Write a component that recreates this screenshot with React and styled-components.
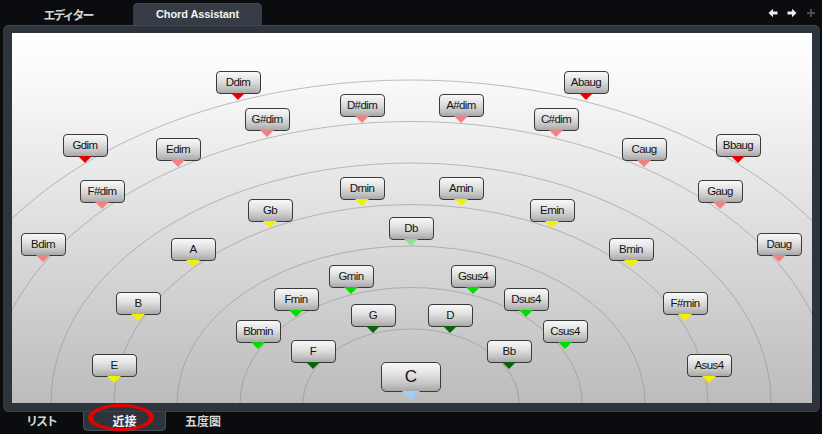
import React from 'react';
import styled, { createGlobalStyle } from 'styled-components';

const Global = createGlobalStyle`
  html, body { margin: 0; padding: 0; background: #0b0c0f; }
  #root { width: 822px; height: 434px; }
`;

const Window = styled.div`
  width: 822px;
  height: 434px;
  background: #0b0c0f;
  display: flex;
  flex-direction: column;
  overflow: hidden;
  font-family: "Liberation Sans", Arial, sans-serif;
`;

const TopBar = styled.div`
  height: 25px;
  flex-shrink: 0;
  display: flex;
  align-items: flex-end;
`;

const TopTab = styled.div`
  height: 22px;
  width: ${p => p.$w}px;
  margin-left: ${p => p.$ml}px;
  display: flex;
  align-items: center;
  justify-content: center;
  box-sizing: border-box;
  font-family: "Liberation Sans", "Noto Sans CJK JP", sans-serif;
  font-weight: bold;
  font-size: ${p => p.$fs}px;
  letter-spacing: ${p => p.$ls}px;
  color: ${p => (p.$active ? '#f2f3f4' : '#d4d5d6')};
  background: ${p => (p.$active ? '#363c45' : 'transparent')};
  border-radius: 5px 5px 0 0;
  box-shadow: ${p => (p.$active ? 'inset 0 1px 0 #454b54' : 'none')};
`;

const Tools = styled.div`
  margin-left: auto;
  align-self: center;
  display: flex;
  align-items: center;
  gap: 9px;
  padding-right: 6px;
`;

const Panel = styled.div`
  margin-left: 3px;
  width: 817px;
  height: 387px;
  flex-shrink: 0;
  box-sizing: border-box;
  padding: 8px 8px 9px 9px;
  background: #2e343c;
  border-radius: 6px;
  box-shadow: inset 0 1px 0 #414850, inset 0 -1px 0 #3a4149;
`;

const Canvas = styled.div`
  position: relative;
  width: 800px;
  height: 370px;
  overflow: hidden;
  background: linear-gradient(to bottom, #ffffff 0%, #fbfbfb 10%, #e3e3e3 45%, #bdbcbc 100%);
`;

const Rings = styled.svg`
  position: absolute;
  inset: 0;
`;

const Node = styled.div.attrs(p => ({
  style: { left: `${p.$x}px`, top: `${p.$y}px` },
}))`
  position: absolute;
  width: ${p => (p.$big ? 60 : 45)}px;
  display: flex;
  flex-direction: column;
  align-items: center;
`;

const ChordBox = styled.div`
  width: 100%;
  height: ${p => (p.$big ? 30 : 23)}px;
  box-sizing: border-box;
  border: 1px solid #3a3a3a;
  border-radius: ${p => (p.$big ? 5 : 4)}px;
  background: linear-gradient(to bottom, #f8f8f8 0%, #e2e2e2 40%, #c4c4c4 75%, #a8a8a8 100%);
  display: flex;
  align-items: center;
  justify-content: center;
  font-family: "Liberation Sans", Arial, sans-serif;
  font-size: ${p => (p.$big ? 17 : 11.5)}px;
  letter-spacing: ${p => (p.$big ? 0 : -0.6)}px;
  color: #141414;
  padding-bottom: 1px;
`;

const Pointer = styled.div`
  width: ${p => (p.$big ? 18 : 14)}px;
  height: ${p => (p.$big ? 10 : 7)}px;
  margin-top: -1px;
  background: ${p => p.$c};
  clip-path: polygon(0 0, 100% 0, 50% 100%);
`;

const BottomBar = styled.div`
  height: 22px;
  flex-shrink: 0;
  display: flex;
  align-items: flex-start;
`;

const BottomTab = styled.div`
  position: relative;
  height: 19px;
  width: ${p => p.$w}px;
  margin-left: ${p => p.$ml}px;
  box-sizing: border-box;
  padding-bottom: 3px;
  display: flex;
  align-items: center;
  justify-content: center;
  font-family: "Noto Sans CJK JP", sans-serif;
  font-weight: bold;
  font-size: 12px;
  line-height: 13px;
  letter-spacing: ${p => p.$ls}px;
  color: ${p => (p.$active ? '#f2f3f4' : '#d4d5d6')};
  background: ${p => (p.$active ? '#2e343c' : 'transparent')};
  border-radius: 0 0 5px 5px;
  box-shadow: ${p => (p.$active ? 'inset 1px 0 0 #464d55, inset -1px 0 0 #464d55, inset 0 -1px 0 #464d55' : 'none')};
`;

const Mark = styled.div`
  position: absolute;
  left: 5px;
  top: -8px;
  width: 66px;
  height: 27px;
  box-sizing: border-box;
  border-style: solid;
  border-color: #e60000;
  border-width: 3px 5px;
  border-radius: 50%;
  z-index: 2;
`;

const R = '#e60000';
const P = '#f08282';
const Y = '#f0f000';
const LG = '#8ee28e';
const G = '#00dd00';
const DG = '#0b620b';
const BL = '#a6cbf3';

const chords = [
  ['Ddim', 238, 100, R], ['Abaug', 586, 100, R],
  ['D#dim', 362, 123, P], ['A#dim', 461, 123, P],
  ['G#dim', 267, 137, P], ['C#dim', 556, 137, P],
  ['Gdim', 85, 163, R], ['Bbaug', 738, 163, R],
  ['Edim', 178, 167, P], ['Caug', 644, 167, P],
  ['F#dim', 102, 209, P], ['Gaug', 720, 209, P],
  ['Dmin', 362, 206, Y], ['Amin', 461, 206, Y],
  ['Gb', 270, 228, Y], ['Emin', 552, 228, Y],
  ['Db', 411, 246, LG],
  ['Bdim', 43, 262, P], ['Daug', 779, 262, P],
  ['A', 193, 267, Y], ['Bmin', 631, 267, Y],
  ['Gmin', 351, 294, G], ['Gsus4', 473, 294, G],
  ['Fmin', 296, 317, G], ['Dsus4', 526, 317, G],
  ['B', 138, 321, Y], ['F#min', 685, 321, Y],
  ['G', 373, 333, DG], ['D', 450, 333, DG],
  ['Bbmin', 258, 349, G], ['Csus4', 565, 349, G],
  ['F', 313, 369, DG], ['Bb', 509, 369, DG],
  ['E', 114, 383, Y], ['Asus4', 709, 383, Y],
];

const rings = [1, 2, 3, 4, 5, 6, 7].map(k => ({ rx: 45 + 63 * k, ry: 32.5 + 41.5 * k }));

const Arrow = ({ dir }) => (
  <svg width="10" height="10" viewBox="0 0 10 10">
    <path
      d="M0.5 5 L5 0.8 L5 3.4 L9.5 3.4 L9.5 6.6 L5 6.6 L5 9.2 Z"
      fill="#ececec"
      transform={dir === 'right' ? 'translate(10 0) scale(-1 1)' : undefined}
    />
  </svg>
);

const Plus = () => (
  <svg width="10" height="10" viewBox="0 0 10 10">
    <path d="M4 1h2v3h3v2h-3v3h-2v-3h-3v-2h3z" fill="#4b4d50" />
  </svg>
);

const Chord = ({ name, x, y, color, big }) => {
  const w = big ? 60 : 45;
  const h = big ? 39 : 29;
  return (
    <Node $x={x - 12 - w / 2} $y={y - 33 - h} $big={big}>
      <ChordBox $big={big}>{name}</ChordBox>
      <Pointer $c={color} $big={big} />
    </Node>
  );
};

export default function App() {
  return (
    <>
      <Global />
      <Window>
        <TopBar>
          <TopTab $w={100} $ml={18} $fs={12} $ls={-2}>エディター</TopTab>
          <TopTab $w={129} $ml={15} $fs={11} $ls={-0.1} $active>Chord Assistant</TopTab>
          <Tools>
            <Arrow dir="left" />
            <Arrow dir="right" />
            <Plus />
          </Tools>
        </TopBar>
        <Panel>
          <Canvas>
            <Rings width="800" height="370" viewBox="0 0 800 370">
              {rings.map((r, i) => (
                <ellipse
                  key={i}
                  cx="399"
                  cy="370"
                  rx={r.rx}
                  ry={r.ry}
                  fill="none"
                  stroke="#8c8c8c"
                  strokeOpacity="0.55"
                  strokeWidth="1"
                />
              ))}
            </Rings>
            {chords.map(([n, x, y, c]) => (
              <Chord key={n} name={n} x={x} y={y} color={c} />
            ))}
            <Chord name="C" x={411} y={401} color={BL} big />
          </Canvas>
        </Panel>
        <BottomBar>
          <BottomTab $w={76} $ml={3} $ls={-2}>リスト</BottomTab>
          <BottomTab $w={83} $ml={4} $ls={0} $active>
            近接
            <Mark />
          </BottomTab>
          <BottomTab $w={74} $ml={0} $ls={0}>五度圏</BottomTab>
        </BottomBar>
      </Window>
    </>
  );
}
